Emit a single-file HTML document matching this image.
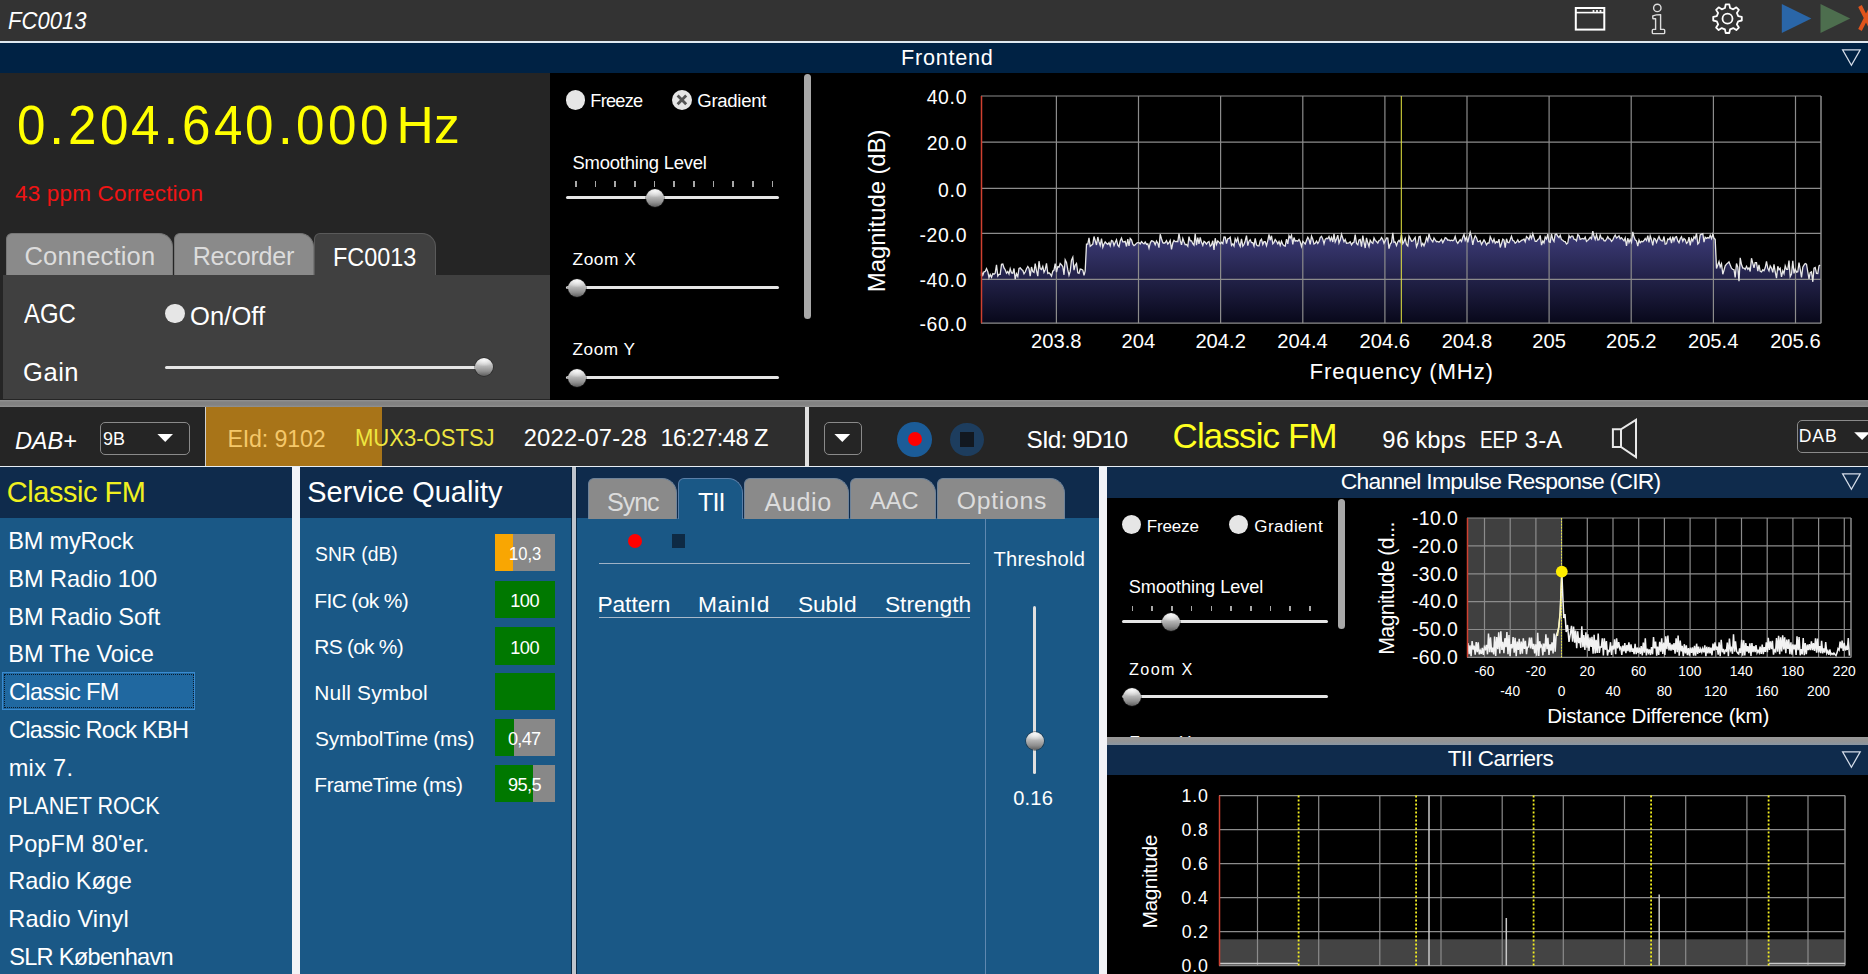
<!DOCTYPE html>
<html><head><meta charset="utf-8"><style>
html,body{margin:0;padding:0;}
body{width:1868px;height:974px;position:relative;overflow:hidden;background:#000;font-family:"Liberation Sans", sans-serif;}
.t{position:absolute;white-space:pre;line-height:1;}
.r{position:absolute;}
</style></head><body>
<div class="r" style="left:0px;top:0px;width:1868.00px;height:41.00px;background:#333333;"></div>
<div class="r" style="left:0px;top:41px;width:1868.00px;height:2.00px;background:#dfe8f0;"></div>
<div class="t" style="left:7.74px;top:9.50px;font-size:23.74px;letter-spacing:0.000px;color:#fff;font-style:italic;transform-origin:0 0;transform:scaleX(0.9285);">FC0013</div>
<svg class="r" style="left:1560px;top:0px" width="308" height="41" viewBox="0 0 308 41">
<rect x="15.8" y="8" width="28.5" height="21.6" fill="none" stroke="#fff" stroke-width="2"/>
<line x1="15" y1="12.6" x2="45" y2="12.6" stroke="#fff" stroke-width="1.6"/>
<circle cx="33.5" cy="11" r="1.1" fill="#fff"/><circle cx="37" cy="11" r="1.1" fill="#fff"/><circle cx="40.5" cy="11" r="1.1" fill="#fff"/>
<circle cx="97.3" cy="7.9" r="3.7" fill="none" stroke="#ddd" stroke-width="1.4"/>
<path d="M92.8 15.8 Q96 14.6 100.6 14.6 V29.4 H103.8 Q104.7 29.4 104.7 30.4 V32.8 Q104.7 33.6 103.8 33.6 H93.2 Q92.3 33.6 92.3 32.8 V30.4 Q92.3 29.4 93.2 29.4 H95.6 V18.8 H93.4 Q92.8 18.8 92.8 18 Z" fill="none" stroke="#ddd" stroke-width="1.4" stroke-linejoin="round"/>
<g transform="translate(167.5,18.7) rotate(-90)" fill="none" stroke="#fff" stroke-width="1.8">
<path d="M10.70 -2.57 L14.29 -1.80 L14.29 1.80 L10.70 2.57 L9.38 5.75 L11.38 8.83 L8.83 11.38 L5.75 9.38 L2.57 10.70 L1.80 14.29 L-1.80 14.29 L-2.57 10.70 L-5.75 9.38 L-8.83 11.38 L-11.38 8.83 L-9.38 5.75 L-10.70 2.57 L-14.29 1.80 L-14.29 -1.80 L-10.70 -2.57 L-9.38 -5.75 L-11.38 -8.83 L-8.83 -11.38 L-5.75 -9.38 L-2.57 -10.70 L-1.80 -14.29 L1.80 -14.29 L2.57 -10.70 L5.75 -9.38 L8.83 -11.38 L11.38 -8.83 L9.38 -5.75 Z" stroke-linejoin="round"/>
<circle r="5"/>
</g>
<polygon points="221.8,4 251.4,18.6 221.8,33" fill="#2a66a8"/>
<polygon points="260.5,4 290.2,18.6 260.5,33" fill="#4d6e4e"/>
<path d="M300 6 L312 30 M312 6 L300 30" stroke="#e0541c" stroke-width="4"/>
</svg>
<div class="r" style="left:0px;top:43px;width:1868.00px;height:30.00px;background:#002244;"></div>
<div class="t" style="left:901.07px;top:46.77px;font-size:21.65px;letter-spacing:0.735px;color:#fff;">Frontend</div>
<svg class="r" style="left:1838px;top:46px" width="26" height="24"><polygon points="4.6,3.8 22.2,3.8 13.4,19.3" fill="none" stroke="#d4dce8" stroke-width="1.25"/></svg>
<div class="r" style="left:0px;top:73px;width:550.00px;height:327.00px;background:#252525;"></div>
<div class="r" style="left:550px;top:73px;width:1318.00px;height:327.00px;background:#000;"></div>
<div class="t" style="left:16.77px;top:98.24px;font-size:54.75px;color:#ffff00;transform-origin:0 0;transform:scaleX(0.935);">0</div>
<div class="t" style="left:49.07px;top:98.24px;font-size:54.75px;color:#ffff00;transform-origin:0 0;transform:scaleX(1.0);">.</div>
<div class="t" style="left:68.29px;top:98.24px;font-size:54.75px;color:#ffff00;transform-origin:0 0;transform:scaleX(0.935);">2</div>
<div class="t" style="left:99.87px;top:98.24px;font-size:54.75px;color:#ffff00;transform-origin:0 0;transform:scaleX(0.935);">0</div>
<div class="t" style="left:130.75px;top:98.24px;font-size:54.75px;color:#ffff00;transform-origin:0 0;transform:scaleX(0.935);">4</div>
<div class="t" style="left:163.37px;top:98.24px;font-size:54.75px;color:#ffff00;transform-origin:0 0;transform:scaleX(1.0);">.</div>
<div class="t" style="left:182.04px;top:98.24px;font-size:54.75px;color:#ffff00;transform-origin:0 0;transform:scaleX(0.935);">6</div>
<div class="t" style="left:213.55px;top:98.24px;font-size:54.75px;color:#ffff00;transform-origin:0 0;transform:scaleX(0.935);">4</div>
<div class="t" style="left:245.37px;top:98.24px;font-size:54.75px;color:#ffff00;transform-origin:0 0;transform:scaleX(0.935);">0</div>
<div class="t" style="left:277.87px;top:98.24px;font-size:54.75px;color:#ffff00;transform-origin:0 0;transform:scaleX(1.0);">.</div>
<div class="t" style="left:296.27px;top:98.24px;font-size:54.75px;color:#ffff00;transform-origin:0 0;transform:scaleX(0.935);">0</div>
<div class="t" style="left:327.87px;top:98.24px;font-size:54.75px;color:#ffff00;transform-origin:0 0;transform:scaleX(0.935);">0</div>
<div class="t" style="left:359.67px;top:98.24px;font-size:54.75px;color:#ffff00;transform-origin:0 0;transform:scaleX(0.935);">0</div>
<div class="t" style="left:396.48px;top:100.26px;font-size:51.54px;letter-spacing:0.225px;color:#ffff00;">Hz</div>
<div class="t" style="left:14.95px;top:183.36px;font-size:22.49px;letter-spacing:0.191px;color:#f01414;">43 ppm Correction</div>
<div class="r" style="left:3px;top:274.5px;width:547.00px;height:124.50px;background:#404040;"></div>
<div class="r" style="left:6px;top:233px;width:167px;height:42px;box-sizing:border-box;background:#8a8a8a;border:1px solid #767676;border-bottom:none;border-radius:6px 14px 0 0;"></div>
<div class="r" style="left:174px;top:233px;width:139.5px;height:42px;box-sizing:border-box;background:#8a8a8a;border:1px solid #767676;border-bottom:none;border-radius:6px 14px 0 0;"></div>
<div class="r" style="left:314px;top:233px;width:122px;height:42px;box-sizing:border-box;background:#404040;border:1px solid #5a5a5a;border-bottom:none;border-radius:6px 14px 0 0;"></div>
<div class="t" style="left:24.52px;top:243.86px;font-size:25.56px;letter-spacing:0.157px;color:#dcdcdc;">Connection</div>
<div class="t" style="left:192.69px;top:244.01px;font-size:25.14px;letter-spacing:-0.219px;color:#dcdcdc;">Recorder</div>
<div class="t" style="left:332.73px;top:244.51px;font-size:25.14px;letter-spacing:0.000px;color:#ffffff;transform-origin:0 0;transform:scaleX(0.9322);">FC0013</div>
<div class="t" style="left:24.40px;top:301.30px;font-size:26.82px;letter-spacing:0.000px;color:#fff;transform-origin:0 0;transform:scaleX(0.8929);">AGC</div>
<div class="r" style="left:165.2px;top:303.7px;width:19.6px;height:19.6px;border-radius:50%;background:#e6e6e6"></div>
<div class="t" style="left:189.95px;top:304.06px;font-size:25.56px;letter-spacing:0.093px;color:#fff;">On/Off</div>
<div class="t" style="left:23.12px;top:359.96px;font-size:25.56px;letter-spacing:0.470px;color:#fff;">Gain</div>
<div class="r" style="left:165px;top:366.0px;width:317.00px;height:3.00px;background:#e6e6e6;border-radius:1.5px;"></div>
<div class="r" style="left:475.0px;top:358.4px;width:18px;height:18px;border-radius:50%;background:radial-gradient(ellipse 60% 35% at 50% 12%, rgba(250,250,250,0.9) 0%, rgba(250,250,250,0) 100%), linear-gradient(#e4e4e4 0%, #c4c4c4 35%, #8e8e8e 75%, #5e5e5e 100%);box-shadow:0 0 0 0.7px rgba(30,30,30,0.6);"></div>
<div class="r" style="left:565.7px;top:90.2px;width:19.8px;height:19.8px;border-radius:50%;background:#e6e6e6"></div>
<div class="t" style="left:590.35px;top:92.43px;font-size:18.16px;letter-spacing:-0.739px;color:#fff;">Freeze</div>
<div class="r" style="left:672.1px;top:90.2px;width:19.8px;height:19.8px;border-radius:50%;background:#e6e6e6"></div>
<svg class="r" style="left:672.1px;top:90.2px" width="19.8" height="19.8"><path d="M5.6000000000000005 5.6000000000000005 L14.2 14.2 M14.2 5.6000000000000005 L5.6000000000000005 14.2" stroke="#555" stroke-width="2.8"/></svg>
<div class="t" style="left:697.27px;top:92.07px;font-size:18.58px;letter-spacing:-0.302px;color:#fff;">Gradient</div>
<div class="t" style="left:572.47px;top:154.39px;font-size:18.44px;letter-spacing:-0.209px;color:#fff;">Smoothing Level</div>
<div class="r" style="left:575.0px;top:181px;width:1.60px;height:6.00px;background:#a8a8a8;"></div>
<div class="r" style="left:594.67px;top:181px;width:1.60px;height:6.00px;background:#a8a8a8;"></div>
<div class="r" style="left:614.34px;top:181px;width:1.60px;height:6.00px;background:#a8a8a8;"></div>
<div class="r" style="left:634.01px;top:181px;width:1.60px;height:6.00px;background:#a8a8a8;"></div>
<div class="r" style="left:653.6800000000001px;top:181px;width:1.60px;height:6.00px;background:#a8a8a8;"></div>
<div class="r" style="left:673.35px;top:181px;width:1.60px;height:6.00px;background:#a8a8a8;"></div>
<div class="r" style="left:693.02px;top:181px;width:1.60px;height:6.00px;background:#a8a8a8;"></div>
<div class="r" style="left:712.69px;top:181px;width:1.60px;height:6.00px;background:#a8a8a8;"></div>
<div class="r" style="left:732.36px;top:181px;width:1.60px;height:6.00px;background:#a8a8a8;"></div>
<div class="r" style="left:752.03px;top:181px;width:1.60px;height:6.00px;background:#a8a8a8;"></div>
<div class="r" style="left:771.7px;top:181px;width:1.60px;height:6.00px;background:#a8a8a8;"></div>
<div class="r" style="left:566px;top:195.8px;width:213.30px;height:3.00px;background:#e6e6e6;border-radius:1.5px;"></div>
<div class="r" style="left:645.7px;top:189.0px;width:18px;height:18px;border-radius:50%;background:radial-gradient(ellipse 60% 35% at 50% 12%, rgba(250,250,250,0.9) 0%, rgba(250,250,250,0) 100%), linear-gradient(#e4e4e4 0%, #c4c4c4 35%, #8e8e8e 75%, #5e5e5e 100%);box-shadow:0 0 0 0.7px rgba(30,30,30,0.6);"></div>
<div class="t" style="left:572.58px;top:250.94px;font-size:17.32px;letter-spacing:0.530px;color:#fff;">Zoom X</div>
<div class="r" style="left:566px;top:285.8px;width:213.30px;height:3.00px;background:#e6e6e6;border-radius:1.5px;"></div>
<div class="r" style="left:567.5px;top:279.0px;width:18px;height:18px;border-radius:50%;background:radial-gradient(ellipse 60% 35% at 50% 12%, rgba(250,250,250,0.9) 0%, rgba(250,250,250,0) 100%), linear-gradient(#e4e4e4 0%, #c4c4c4 35%, #8e8e8e 75%, #5e5e5e 100%);box-shadow:0 0 0 0.7px rgba(30,30,30,0.6);"></div>
<div class="t" style="left:572.58px;top:340.75px;font-size:17.18px;letter-spacing:0.535px;color:#fff;">Zoom Y</div>
<div class="r" style="left:566px;top:376.0px;width:213.30px;height:3.00px;background:#e6e6e6;border-radius:1.5px;"></div>
<div class="r" style="left:567.5px;top:368.8px;width:18px;height:18px;border-radius:50%;background:radial-gradient(ellipse 60% 35% at 50% 12%, rgba(250,250,250,0.9) 0%, rgba(250,250,250,0) 100%), linear-gradient(#e4e4e4 0%, #c4c4c4 35%, #8e8e8e 75%, #5e5e5e 100%);box-shadow:0 0 0 0.7px rgba(30,30,30,0.6);"></div>
<div class="r" style="left:803.5px;top:74px;width:7.50px;height:245.00px;background:#a8a8a8;border-radius:4px;"></div>
<svg class="r" style="left:0;top:0" width="1868" height="974">
<defs><linearGradient id="fg" x1="0" y1="0" x2="0" y2="1"><stop offset="0" stop-color="#3e3d7a"/><stop offset="1" stop-color="#08081a"/></linearGradient></defs>
<polygon points="981,323.2 981.5,276.0 981.5,271.8 982.8,275.2 984.0,271.8 985.2,271.4 986.5,268.6 987.8,271.7 989.0,277.6 990.2,274.5 991.5,277.2 992.8,273.6 994.0,274.2 995.2,273.2 996.5,264.8 997.8,276.1 999.0,274.4 1000.2,274.3 1001.5,264.4 1002.8,264.1 1004.0,267.9 1005.2,269.7 1006.5,273.2 1007.8,271.5 1009.0,274.0 1010.2,268.7 1011.5,272.9 1012.8,273.3 1014.0,268.5 1015.2,279.1 1016.5,273.8 1017.8,276.6 1019.0,268.4 1020.2,267.8 1021.5,269.5 1022.8,270.5 1024.0,273.8 1025.2,272.0 1026.5,268.8 1027.8,266.5 1029.0,268.4 1030.2,276.1 1031.5,267.0 1032.8,271.6 1034.0,272.4 1035.2,263.7 1036.5,270.6 1037.8,276.2 1039.0,261.2 1040.2,268.7 1041.5,269.6 1042.8,266.4 1044.0,272.2 1045.2,269.7 1046.5,263.3 1047.8,273.5 1049.0,272.8 1050.2,274.0 1051.5,276.1 1052.8,271.2 1054.0,270.1 1055.2,263.6 1056.5,272.2 1057.8,266.6 1059.0,267.2 1060.2,263.5 1061.5,264.8 1062.8,266.7 1064.0,274.8 1065.2,259.8 1066.5,262.4 1067.8,269.9 1069.0,275.3 1070.2,271.4 1071.5,260.1 1072.8,257.3 1074.0,270.2 1075.2,265.2 1076.5,263.4 1077.8,272.8 1079.0,273.3 1080.2,269.0 1081.5,269.3 1082.8,270.1 1084.0,275.3 1085.2,270.8 1086.5,244.1 1087.8,244.1 1089.0,237.8 1090.2,246.3 1091.5,245.3 1092.8,244.1 1094.0,236.5 1095.2,240.5 1096.5,245.0 1097.8,237.0 1099.0,241.9 1100.2,245.5 1101.5,238.5 1102.8,247.2 1104.0,244.0 1105.2,241.9 1106.5,243.4 1107.8,244.3 1109.0,242.7 1110.2,245.8 1111.5,240.4 1112.8,241.1 1114.0,245.5 1115.2,242.4 1116.5,239.7 1117.8,245.1 1119.0,246.7 1120.2,241.0 1121.5,238.1 1122.8,241.9 1124.0,241.8 1125.2,241.4 1126.5,246.5 1127.8,239.2 1129.0,246.0 1130.2,238.4 1131.5,239.9 1132.8,244.1 1134.0,245.6 1135.2,244.8 1136.5,243.2 1137.8,242.6 1139.0,242.6 1140.2,243.9 1141.5,241.6 1142.8,243.0 1144.0,243.9 1145.2,242.1 1146.5,244.4 1147.8,243.8 1149.0,248.1 1150.2,243.1 1151.5,240.8 1152.8,241.0 1154.0,242.0 1155.2,244.8 1156.5,241.0 1157.8,243.2 1159.0,247.6 1160.2,234.3 1161.5,238.7 1162.8,242.7 1164.0,243.2 1165.2,242.7 1166.5,240.7 1167.8,244.0 1169.0,242.8 1170.2,240.4 1171.5,249.3 1172.8,243.0 1174.0,240.3 1175.2,241.6 1176.5,241.3 1177.8,241.7 1179.0,233.7 1180.2,240.4 1181.5,244.9 1182.8,238.4 1184.0,241.7 1185.2,244.7 1186.5,244.4 1187.8,246.3 1189.0,236.7 1190.2,240.8 1191.5,240.8 1192.8,243.7 1194.0,245.1 1195.2,233.8 1196.5,245.1 1197.8,237.5 1199.0,243.8 1200.2,237.3 1201.5,242.3 1202.8,245.3 1204.0,241.3 1205.2,242.3 1206.5,244.1 1207.8,242.2 1209.0,241.5 1210.2,246.3 1211.5,244.9 1212.8,240.8 1214.0,249.9 1215.2,238.2 1216.5,244.4 1217.8,240.9 1219.0,242.1 1220.2,243.8 1221.5,242.3 1222.8,243.6 1224.0,237.0 1225.2,237.1 1226.5,243.5 1227.8,238.7 1229.0,238.5 1230.2,237.2 1231.5,245.4 1232.8,243.8 1234.0,246.0 1235.2,238.7 1236.5,241.6 1237.8,238.1 1239.0,243.8 1240.2,246.3 1241.5,238.8 1242.8,246.2 1244.0,244.5 1245.2,241.0 1246.5,235.6 1247.8,245.7 1249.0,241.2 1250.2,239.7 1251.5,242.7 1252.8,242.7 1254.0,245.9 1255.2,238.4 1256.5,244.8 1257.8,245.9 1259.0,245.8 1260.2,240.9 1261.5,239.2 1262.8,244.4 1264.0,241.7 1265.2,241.7 1266.5,245.6 1267.8,240.6 1269.0,234.5 1270.2,240.2 1271.5,235.8 1272.8,243.8 1274.0,242.3 1275.2,239.5 1276.5,241.3 1277.8,243.8 1279.0,241.5 1280.2,245.3 1281.5,241.1 1282.8,244.4 1284.0,245.7 1285.2,246.1 1286.5,239.2 1287.8,243.9 1289.0,235.6 1290.2,238.0 1291.5,235.3 1292.8,244.4 1294.0,237.5 1295.2,241.1 1296.5,240.6 1297.8,241.1 1299.0,239.4 1300.2,241.8 1301.5,246.5 1302.8,241.3 1304.0,242.7 1305.2,244.1 1306.5,240.5 1307.8,237.3 1309.0,239.4 1310.2,244.3 1311.5,236.1 1312.8,239.3 1314.0,244.1 1315.2,243.4 1316.5,241.1 1317.8,243.4 1319.0,241.5 1320.2,237.5 1321.5,236.3 1322.8,239.1 1324.0,243.8 1325.2,239.3 1326.5,238.3 1327.8,238.7 1329.0,236.4 1330.2,240.6 1331.5,237.4 1332.8,242.0 1334.0,233.8 1335.2,241.9 1336.5,239.0 1337.8,235.1 1339.0,243.1 1340.2,240.1 1341.5,234.2 1342.8,238.2 1344.0,241.7 1345.2,239.5 1346.5,243.2 1347.8,243.1 1349.0,242.8 1350.2,241.8 1351.5,244.8 1352.8,242.8 1354.0,242.2 1355.2,234.5 1356.5,243.5 1357.8,244.7 1359.0,239.9 1360.2,239.4 1361.5,246.6 1362.8,235.5 1364.0,242.1 1365.2,248.0 1366.5,237.9 1367.8,242.8 1369.0,246.4 1370.2,240.3 1371.5,242.4 1372.8,243.4 1374.0,238.0 1375.2,240.4 1376.5,241.5 1377.8,243.1 1379.0,240.5 1380.2,240.0 1381.5,237.6 1382.8,239.5 1384.0,243.3 1385.2,240.9 1386.5,238.0 1387.8,238.1 1389.0,248.6 1390.2,244.0 1391.5,242.5 1392.8,232.8 1394.0,242.4 1395.2,242.0 1396.5,245.6 1397.8,241.8 1399.0,240.3 1400.2,242.1 1401.5,234.7 1402.8,243.6 1404.0,241.5 1405.2,238.4 1406.5,244.4 1407.8,245.9 1409.0,236.2 1410.2,238.4 1411.5,241.3 1412.8,241.0 1414.0,239.2 1415.2,237.5 1416.5,246.8 1417.8,243.5 1419.0,236.8 1420.2,236.3 1421.5,245.5 1422.8,243.3 1424.0,245.8 1425.2,242.8 1426.5,237.7 1427.8,241.1 1429.0,233.8 1430.2,238.1 1431.5,240.1 1432.8,241.9 1434.0,238.1 1435.2,239.9 1436.5,241.7 1437.8,241.4 1439.0,242.2 1440.2,240.9 1441.5,239.3 1442.8,242.6 1444.0,240.4 1445.2,237.7 1446.5,238.3 1447.8,240.2 1449.0,239.9 1450.2,240.7 1451.5,240.2 1452.8,240.7 1454.0,239.8 1455.2,236.4 1456.5,241.4 1457.8,243.3 1459.0,241.4 1460.2,239.6 1461.5,241.5 1462.8,237.2 1464.0,234.4 1465.2,240.3 1466.5,237.3 1467.8,242.3 1469.0,236.8 1470.2,232.2 1471.5,236.9 1472.8,244.8 1474.0,238.9 1475.2,235.9 1476.5,237.7 1477.8,241.6 1479.0,241.5 1480.2,240.5 1481.5,244.4 1482.8,242.1 1484.0,239.9 1485.2,241.8 1486.5,244.9 1487.8,242.9 1489.0,243.0 1490.2,236.7 1491.5,239.5 1492.8,242.1 1494.0,239.0 1495.2,243.1 1496.5,241.7 1497.8,242.6 1499.0,239.2 1500.2,247.5 1501.5,243.6 1502.8,239.2 1504.0,240.1 1505.2,247.6 1506.5,238.8 1507.8,242.4 1509.0,242.8 1510.2,239.8 1511.5,236.3 1512.8,240.4 1514.0,240.9 1515.2,243.2 1516.5,242.1 1517.8,239.8 1519.0,242.3 1520.2,241.4 1521.5,240.4 1522.8,239.9 1524.0,239.0 1525.2,241.8 1526.5,236.5 1527.8,237.8 1529.0,239.7 1530.2,235.3 1531.5,238.4 1532.8,233.6 1534.0,237.6 1535.2,241.4 1536.5,241.3 1537.8,239.5 1539.0,238.9 1540.2,235.4 1541.5,245.1 1542.8,241.1 1544.0,242.9 1545.2,236.9 1546.5,239.0 1547.8,234.1 1549.0,241.9 1550.2,242.4 1551.5,233.9 1552.8,239.4 1554.0,241.4 1555.2,234.2 1556.5,234.0 1557.8,236.3 1559.0,237.6 1560.2,235.3 1561.5,239.6 1562.8,240.2 1564.0,241.4 1565.2,241.6 1566.5,244.0 1567.8,242.9 1569.0,235.5 1570.2,237.9 1571.5,236.2 1572.8,236.2 1574.0,239.2 1575.2,239.4 1576.5,240.9 1577.8,234.6 1579.0,235.7 1580.2,239.3 1581.5,238.8 1582.8,238.4 1584.0,239.1 1585.2,237.1 1586.5,241.4 1587.8,240.4 1589.0,239.0 1590.2,237.3 1591.5,238.8 1592.8,231.1 1594.0,236.3 1595.2,239.4 1596.5,234.7 1597.8,239.9 1599.0,239.7 1600.2,235.1 1601.5,238.5 1602.8,238.3 1604.0,240.6 1605.2,241.0 1606.5,239.1 1607.8,236.6 1609.0,238.7 1610.2,239.0 1611.5,241.4 1612.8,240.0 1614.0,237.0 1615.2,235.1 1616.5,238.0 1617.8,236.9 1619.0,235.8 1620.2,238.8 1621.5,237.6 1622.8,239.4 1624.0,240.7 1625.2,237.8 1626.5,246.0 1627.8,238.1 1629.0,242.4 1630.2,239.4 1631.5,242.4 1632.8,231.9 1634.0,236.8 1635.2,239.8 1636.5,240.8 1637.8,246.0 1639.0,240.0 1640.2,242.8 1641.5,241.3 1642.8,241.8 1644.0,240.5 1645.2,238.5 1646.5,240.5 1647.8,235.7 1649.0,242.5 1650.2,235.9 1651.5,239.7 1652.8,245.3 1654.0,238.2 1655.2,238.9 1656.5,242.4 1657.8,238.9 1659.0,236.4 1660.2,239.6 1661.5,240.6 1662.8,241.0 1664.0,236.5 1665.2,244.1 1666.5,243.8 1667.8,238.9 1669.0,239.6 1670.2,237.5 1671.5,243.0 1672.8,236.7 1674.0,240.8 1675.2,237.3 1676.5,236.7 1677.8,240.9 1679.0,242.7 1680.2,238.7 1681.5,236.7 1682.8,241.1 1684.0,238.6 1685.2,239.6 1686.5,243.3 1687.8,242.1 1689.0,237.1 1690.2,245.5 1691.5,238.7 1692.8,241.0 1694.0,236.7 1695.2,238.5 1696.5,233.4 1697.8,244.0 1699.0,242.7 1700.2,235.0 1701.5,234.1 1702.8,233.7 1704.0,242.1 1705.2,237.2 1706.5,238.4 1707.8,237.6 1709.0,238.2 1710.2,235.3 1711.5,238.6 1712.8,234.2 1714.0,238.3 1715.2,239.4 1716.5,268.4 1717.8,264.9 1719.0,261.6 1720.2,267.0 1721.5,263.8 1722.8,274.2 1724.0,270.2 1725.2,265.9 1726.5,264.1 1727.8,263.0 1729.0,261.9 1730.2,264.9 1731.5,268.2 1732.8,269.4 1734.0,269.7 1735.2,277.4 1736.5,263.5 1737.8,267.1 1739.0,281.1 1740.2,257.8 1741.5,264.6 1742.8,268.1 1744.0,268.1 1745.2,269.4 1746.5,266.3 1747.8,269.3 1749.0,267.8 1750.2,271.5 1751.5,258.2 1752.8,263.3 1754.0,267.8 1755.2,262.7 1756.5,262.7 1757.8,271.1 1759.0,264.8 1760.2,271.3 1761.5,271.9 1762.8,269.8 1764.0,270.8 1765.2,267.8 1766.5,261.4 1767.8,268.3 1769.0,270.8 1770.2,265.9 1771.5,268.1 1772.8,272.4 1774.0,264.4 1775.2,272.0 1776.5,278.2 1777.8,266.2 1779.0,269.7 1780.2,268.3 1781.5,276.8 1782.8,270.8 1784.0,273.7 1785.2,265.8 1786.5,269.3 1787.8,269.4 1789.0,260.6 1790.2,276.7 1791.5,274.1 1792.8,260.9 1794.0,273.4 1795.2,269.1 1796.5,272.1 1797.8,271.7 1799.0,262.5 1800.2,269.0 1801.5,277.5 1802.8,267.3 1804.0,265.1 1805.2,263.5 1806.5,264.2 1807.8,272.0 1809.0,278.9 1810.2,272.6 1811.5,271.8 1812.8,281.8 1814.0,268.1 1815.2,267.4 1816.5,273.4 1817.8,273.6 1819.0,265.8 1820.2,265.1 1821,323.2" fill="url(#fg)"/>
<line x1="981" y1="96.0" x2="1821" y2="96.0" stroke="#8c8c8c" stroke-width="1.2"/>
<line x1="981" y1="142.2" x2="1821" y2="142.2" stroke="#8c8c8c" stroke-width="1.2"/>
<line x1="981" y1="188.4" x2="1821" y2="188.4" stroke="#8c8c8c" stroke-width="1.2"/>
<line x1="981" y1="233.4" x2="1821" y2="233.4" stroke="#8c8c8c" stroke-width="1.2"/>
<line x1="981" y1="279.3" x2="1821" y2="279.3" stroke="#8c8c8c" stroke-width="1.2"/>
<line x1="981" y1="323.2" x2="1821" y2="323.2" stroke="#8c8c8c" stroke-width="1.2"/>
<line x1="1056.4" y1="96" x2="1056.4" y2="323.2" stroke="#8c8c8c" stroke-width="1.2"/>
<line x1="1138.5" y1="96" x2="1138.5" y2="323.2" stroke="#8c8c8c" stroke-width="1.2"/>
<line x1="1220.6" y1="96" x2="1220.6" y2="323.2" stroke="#8c8c8c" stroke-width="1.2"/>
<line x1="1302.8" y1="96" x2="1302.8" y2="323.2" stroke="#8c8c8c" stroke-width="1.2"/>
<line x1="1384.9" y1="96" x2="1384.9" y2="323.2" stroke="#8c8c8c" stroke-width="1.2"/>
<line x1="1467.0" y1="96" x2="1467.0" y2="323.2" stroke="#8c8c8c" stroke-width="1.2"/>
<line x1="1549.1" y1="96" x2="1549.1" y2="323.2" stroke="#8c8c8c" stroke-width="1.2"/>
<line x1="1631.2" y1="96" x2="1631.2" y2="323.2" stroke="#8c8c8c" stroke-width="1.2"/>
<line x1="1713.4" y1="96" x2="1713.4" y2="323.2" stroke="#8c8c8c" stroke-width="1.2"/>
<line x1="1795.5" y1="96" x2="1795.5" y2="323.2" stroke="#8c8c8c" stroke-width="1.2"/>
<line x1="1821" y1="96" x2="1821" y2="323.2" stroke="#8c8c8c" stroke-width="1.5"/>
<polyline points="981.5,276.0 981.5,271.8 982.8,275.2 984.0,271.8 985.2,271.4 986.5,268.6 987.8,271.7 989.0,277.6 990.2,274.5 991.5,277.2 992.8,273.6 994.0,274.2 995.2,273.2 996.5,264.8 997.8,276.1 999.0,274.4 1000.2,274.3 1001.5,264.4 1002.8,264.1 1004.0,267.9 1005.2,269.7 1006.5,273.2 1007.8,271.5 1009.0,274.0 1010.2,268.7 1011.5,272.9 1012.8,273.3 1014.0,268.5 1015.2,279.1 1016.5,273.8 1017.8,276.6 1019.0,268.4 1020.2,267.8 1021.5,269.5 1022.8,270.5 1024.0,273.8 1025.2,272.0 1026.5,268.8 1027.8,266.5 1029.0,268.4 1030.2,276.1 1031.5,267.0 1032.8,271.6 1034.0,272.4 1035.2,263.7 1036.5,270.6 1037.8,276.2 1039.0,261.2 1040.2,268.7 1041.5,269.6 1042.8,266.4 1044.0,272.2 1045.2,269.7 1046.5,263.3 1047.8,273.5 1049.0,272.8 1050.2,274.0 1051.5,276.1 1052.8,271.2 1054.0,270.1 1055.2,263.6 1056.5,272.2 1057.8,266.6 1059.0,267.2 1060.2,263.5 1061.5,264.8 1062.8,266.7 1064.0,274.8 1065.2,259.8 1066.5,262.4 1067.8,269.9 1069.0,275.3 1070.2,271.4 1071.5,260.1 1072.8,257.3 1074.0,270.2 1075.2,265.2 1076.5,263.4 1077.8,272.8 1079.0,273.3 1080.2,269.0 1081.5,269.3 1082.8,270.1 1084.0,275.3 1085.2,270.8 1086.5,244.1 1087.8,244.1 1089.0,237.8 1090.2,246.3 1091.5,245.3 1092.8,244.1 1094.0,236.5 1095.2,240.5 1096.5,245.0 1097.8,237.0 1099.0,241.9 1100.2,245.5 1101.5,238.5 1102.8,247.2 1104.0,244.0 1105.2,241.9 1106.5,243.4 1107.8,244.3 1109.0,242.7 1110.2,245.8 1111.5,240.4 1112.8,241.1 1114.0,245.5 1115.2,242.4 1116.5,239.7 1117.8,245.1 1119.0,246.7 1120.2,241.0 1121.5,238.1 1122.8,241.9 1124.0,241.8 1125.2,241.4 1126.5,246.5 1127.8,239.2 1129.0,246.0 1130.2,238.4 1131.5,239.9 1132.8,244.1 1134.0,245.6 1135.2,244.8 1136.5,243.2 1137.8,242.6 1139.0,242.6 1140.2,243.9 1141.5,241.6 1142.8,243.0 1144.0,243.9 1145.2,242.1 1146.5,244.4 1147.8,243.8 1149.0,248.1 1150.2,243.1 1151.5,240.8 1152.8,241.0 1154.0,242.0 1155.2,244.8 1156.5,241.0 1157.8,243.2 1159.0,247.6 1160.2,234.3 1161.5,238.7 1162.8,242.7 1164.0,243.2 1165.2,242.7 1166.5,240.7 1167.8,244.0 1169.0,242.8 1170.2,240.4 1171.5,249.3 1172.8,243.0 1174.0,240.3 1175.2,241.6 1176.5,241.3 1177.8,241.7 1179.0,233.7 1180.2,240.4 1181.5,244.9 1182.8,238.4 1184.0,241.7 1185.2,244.7 1186.5,244.4 1187.8,246.3 1189.0,236.7 1190.2,240.8 1191.5,240.8 1192.8,243.7 1194.0,245.1 1195.2,233.8 1196.5,245.1 1197.8,237.5 1199.0,243.8 1200.2,237.3 1201.5,242.3 1202.8,245.3 1204.0,241.3 1205.2,242.3 1206.5,244.1 1207.8,242.2 1209.0,241.5 1210.2,246.3 1211.5,244.9 1212.8,240.8 1214.0,249.9 1215.2,238.2 1216.5,244.4 1217.8,240.9 1219.0,242.1 1220.2,243.8 1221.5,242.3 1222.8,243.6 1224.0,237.0 1225.2,237.1 1226.5,243.5 1227.8,238.7 1229.0,238.5 1230.2,237.2 1231.5,245.4 1232.8,243.8 1234.0,246.0 1235.2,238.7 1236.5,241.6 1237.8,238.1 1239.0,243.8 1240.2,246.3 1241.5,238.8 1242.8,246.2 1244.0,244.5 1245.2,241.0 1246.5,235.6 1247.8,245.7 1249.0,241.2 1250.2,239.7 1251.5,242.7 1252.8,242.7 1254.0,245.9 1255.2,238.4 1256.5,244.8 1257.8,245.9 1259.0,245.8 1260.2,240.9 1261.5,239.2 1262.8,244.4 1264.0,241.7 1265.2,241.7 1266.5,245.6 1267.8,240.6 1269.0,234.5 1270.2,240.2 1271.5,235.8 1272.8,243.8 1274.0,242.3 1275.2,239.5 1276.5,241.3 1277.8,243.8 1279.0,241.5 1280.2,245.3 1281.5,241.1 1282.8,244.4 1284.0,245.7 1285.2,246.1 1286.5,239.2 1287.8,243.9 1289.0,235.6 1290.2,238.0 1291.5,235.3 1292.8,244.4 1294.0,237.5 1295.2,241.1 1296.5,240.6 1297.8,241.1 1299.0,239.4 1300.2,241.8 1301.5,246.5 1302.8,241.3 1304.0,242.7 1305.2,244.1 1306.5,240.5 1307.8,237.3 1309.0,239.4 1310.2,244.3 1311.5,236.1 1312.8,239.3 1314.0,244.1 1315.2,243.4 1316.5,241.1 1317.8,243.4 1319.0,241.5 1320.2,237.5 1321.5,236.3 1322.8,239.1 1324.0,243.8 1325.2,239.3 1326.5,238.3 1327.8,238.7 1329.0,236.4 1330.2,240.6 1331.5,237.4 1332.8,242.0 1334.0,233.8 1335.2,241.9 1336.5,239.0 1337.8,235.1 1339.0,243.1 1340.2,240.1 1341.5,234.2 1342.8,238.2 1344.0,241.7 1345.2,239.5 1346.5,243.2 1347.8,243.1 1349.0,242.8 1350.2,241.8 1351.5,244.8 1352.8,242.8 1354.0,242.2 1355.2,234.5 1356.5,243.5 1357.8,244.7 1359.0,239.9 1360.2,239.4 1361.5,246.6 1362.8,235.5 1364.0,242.1 1365.2,248.0 1366.5,237.9 1367.8,242.8 1369.0,246.4 1370.2,240.3 1371.5,242.4 1372.8,243.4 1374.0,238.0 1375.2,240.4 1376.5,241.5 1377.8,243.1 1379.0,240.5 1380.2,240.0 1381.5,237.6 1382.8,239.5 1384.0,243.3 1385.2,240.9 1386.5,238.0 1387.8,238.1 1389.0,248.6 1390.2,244.0 1391.5,242.5 1392.8,232.8 1394.0,242.4 1395.2,242.0 1396.5,245.6 1397.8,241.8 1399.0,240.3 1400.2,242.1 1401.5,234.7 1402.8,243.6 1404.0,241.5 1405.2,238.4 1406.5,244.4 1407.8,245.9 1409.0,236.2 1410.2,238.4 1411.5,241.3 1412.8,241.0 1414.0,239.2 1415.2,237.5 1416.5,246.8 1417.8,243.5 1419.0,236.8 1420.2,236.3 1421.5,245.5 1422.8,243.3 1424.0,245.8 1425.2,242.8 1426.5,237.7 1427.8,241.1 1429.0,233.8 1430.2,238.1 1431.5,240.1 1432.8,241.9 1434.0,238.1 1435.2,239.9 1436.5,241.7 1437.8,241.4 1439.0,242.2 1440.2,240.9 1441.5,239.3 1442.8,242.6 1444.0,240.4 1445.2,237.7 1446.5,238.3 1447.8,240.2 1449.0,239.9 1450.2,240.7 1451.5,240.2 1452.8,240.7 1454.0,239.8 1455.2,236.4 1456.5,241.4 1457.8,243.3 1459.0,241.4 1460.2,239.6 1461.5,241.5 1462.8,237.2 1464.0,234.4 1465.2,240.3 1466.5,237.3 1467.8,242.3 1469.0,236.8 1470.2,232.2 1471.5,236.9 1472.8,244.8 1474.0,238.9 1475.2,235.9 1476.5,237.7 1477.8,241.6 1479.0,241.5 1480.2,240.5 1481.5,244.4 1482.8,242.1 1484.0,239.9 1485.2,241.8 1486.5,244.9 1487.8,242.9 1489.0,243.0 1490.2,236.7 1491.5,239.5 1492.8,242.1 1494.0,239.0 1495.2,243.1 1496.5,241.7 1497.8,242.6 1499.0,239.2 1500.2,247.5 1501.5,243.6 1502.8,239.2 1504.0,240.1 1505.2,247.6 1506.5,238.8 1507.8,242.4 1509.0,242.8 1510.2,239.8 1511.5,236.3 1512.8,240.4 1514.0,240.9 1515.2,243.2 1516.5,242.1 1517.8,239.8 1519.0,242.3 1520.2,241.4 1521.5,240.4 1522.8,239.9 1524.0,239.0 1525.2,241.8 1526.5,236.5 1527.8,237.8 1529.0,239.7 1530.2,235.3 1531.5,238.4 1532.8,233.6 1534.0,237.6 1535.2,241.4 1536.5,241.3 1537.8,239.5 1539.0,238.9 1540.2,235.4 1541.5,245.1 1542.8,241.1 1544.0,242.9 1545.2,236.9 1546.5,239.0 1547.8,234.1 1549.0,241.9 1550.2,242.4 1551.5,233.9 1552.8,239.4 1554.0,241.4 1555.2,234.2 1556.5,234.0 1557.8,236.3 1559.0,237.6 1560.2,235.3 1561.5,239.6 1562.8,240.2 1564.0,241.4 1565.2,241.6 1566.5,244.0 1567.8,242.9 1569.0,235.5 1570.2,237.9 1571.5,236.2 1572.8,236.2 1574.0,239.2 1575.2,239.4 1576.5,240.9 1577.8,234.6 1579.0,235.7 1580.2,239.3 1581.5,238.8 1582.8,238.4 1584.0,239.1 1585.2,237.1 1586.5,241.4 1587.8,240.4 1589.0,239.0 1590.2,237.3 1591.5,238.8 1592.8,231.1 1594.0,236.3 1595.2,239.4 1596.5,234.7 1597.8,239.9 1599.0,239.7 1600.2,235.1 1601.5,238.5 1602.8,238.3 1604.0,240.6 1605.2,241.0 1606.5,239.1 1607.8,236.6 1609.0,238.7 1610.2,239.0 1611.5,241.4 1612.8,240.0 1614.0,237.0 1615.2,235.1 1616.5,238.0 1617.8,236.9 1619.0,235.8 1620.2,238.8 1621.5,237.6 1622.8,239.4 1624.0,240.7 1625.2,237.8 1626.5,246.0 1627.8,238.1 1629.0,242.4 1630.2,239.4 1631.5,242.4 1632.8,231.9 1634.0,236.8 1635.2,239.8 1636.5,240.8 1637.8,246.0 1639.0,240.0 1640.2,242.8 1641.5,241.3 1642.8,241.8 1644.0,240.5 1645.2,238.5 1646.5,240.5 1647.8,235.7 1649.0,242.5 1650.2,235.9 1651.5,239.7 1652.8,245.3 1654.0,238.2 1655.2,238.9 1656.5,242.4 1657.8,238.9 1659.0,236.4 1660.2,239.6 1661.5,240.6 1662.8,241.0 1664.0,236.5 1665.2,244.1 1666.5,243.8 1667.8,238.9 1669.0,239.6 1670.2,237.5 1671.5,243.0 1672.8,236.7 1674.0,240.8 1675.2,237.3 1676.5,236.7 1677.8,240.9 1679.0,242.7 1680.2,238.7 1681.5,236.7 1682.8,241.1 1684.0,238.6 1685.2,239.6 1686.5,243.3 1687.8,242.1 1689.0,237.1 1690.2,245.5 1691.5,238.7 1692.8,241.0 1694.0,236.7 1695.2,238.5 1696.5,233.4 1697.8,244.0 1699.0,242.7 1700.2,235.0 1701.5,234.1 1702.8,233.7 1704.0,242.1 1705.2,237.2 1706.5,238.4 1707.8,237.6 1709.0,238.2 1710.2,235.3 1711.5,238.6 1712.8,234.2 1714.0,238.3 1715.2,239.4 1716.5,268.4 1717.8,264.9 1719.0,261.6 1720.2,267.0 1721.5,263.8 1722.8,274.2 1724.0,270.2 1725.2,265.9 1726.5,264.1 1727.8,263.0 1729.0,261.9 1730.2,264.9 1731.5,268.2 1732.8,269.4 1734.0,269.7 1735.2,277.4 1736.5,263.5 1737.8,267.1 1739.0,281.1 1740.2,257.8 1741.5,264.6 1742.8,268.1 1744.0,268.1 1745.2,269.4 1746.5,266.3 1747.8,269.3 1749.0,267.8 1750.2,271.5 1751.5,258.2 1752.8,263.3 1754.0,267.8 1755.2,262.7 1756.5,262.7 1757.8,271.1 1759.0,264.8 1760.2,271.3 1761.5,271.9 1762.8,269.8 1764.0,270.8 1765.2,267.8 1766.5,261.4 1767.8,268.3 1769.0,270.8 1770.2,265.9 1771.5,268.1 1772.8,272.4 1774.0,264.4 1775.2,272.0 1776.5,278.2 1777.8,266.2 1779.0,269.7 1780.2,268.3 1781.5,276.8 1782.8,270.8 1784.0,273.7 1785.2,265.8 1786.5,269.3 1787.8,269.4 1789.0,260.6 1790.2,276.7 1791.5,274.1 1792.8,260.9 1794.0,273.4 1795.2,269.1 1796.5,272.1 1797.8,271.7 1799.0,262.5 1800.2,269.0 1801.5,277.5 1802.8,267.3 1804.0,265.1 1805.2,263.5 1806.5,264.2 1807.8,272.0 1809.0,278.9 1810.2,272.6 1811.5,271.8 1812.8,281.8 1814.0,268.1 1815.2,267.4 1816.5,273.4 1817.8,273.6 1819.0,265.8 1820.2,265.1" fill="none" stroke="#e8e8e8" stroke-width="1.3"/>
<line x1="981.5" y1="96" x2="981.5" y2="323.2" stroke="#d04030" stroke-width="1.5"/>
<line x1="1401.3" y1="96" x2="1401.3" y2="323.2" stroke="#e8e840" stroke-width="1"/>
</svg>
<div class="t" style="left:926.65px;top:88.17px;font-size:19.40px;letter-spacing:0.700px;color:#fff;">40.0</div>
<div class="t" style="left:926.65px;top:134.37px;font-size:19.40px;letter-spacing:0.700px;color:#fff;">20.0</div>
<div class="t" style="left:938.11px;top:180.57px;font-size:19.40px;letter-spacing:0.700px;color:#fff;">0.0</div>
<div class="t" style="left:919.45px;top:225.57px;font-size:19.40px;letter-spacing:0.700px;color:#fff;">-20.0</div>
<div class="t" style="left:919.45px;top:271.47px;font-size:19.40px;letter-spacing:0.700px;color:#fff;">-40.0</div>
<div class="t" style="left:919.45px;top:315.37px;font-size:19.40px;letter-spacing:0.700px;color:#fff;">-60.0</div>
<div class="t" style="left:1031.05px;top:331.10px;font-size:20.20px;letter-spacing:0.000px;color:#fff;">203.8</div>
<div class="t" style="left:1121.50px;top:331.10px;font-size:20.20px;letter-spacing:0.000px;color:#fff;">204</div>
<div class="t" style="left:1195.39px;top:331.10px;font-size:20.20px;letter-spacing:0.000px;color:#fff;">204.2</div>
<div class="t" style="left:1277.31px;top:331.10px;font-size:20.20px;letter-spacing:0.000px;color:#fff;">204.4</div>
<div class="t" style="left:1359.53px;top:331.10px;font-size:20.20px;letter-spacing:0.000px;color:#fff;">204.6</div>
<div class="t" style="left:1441.65px;top:331.10px;font-size:20.20px;letter-spacing:0.000px;color:#fff;">204.8</div>
<div class="t" style="left:1532.20px;top:331.10px;font-size:20.20px;letter-spacing:0.000px;color:#fff;">205</div>
<div class="t" style="left:1605.99px;top:331.10px;font-size:20.20px;letter-spacing:0.000px;color:#fff;">205.2</div>
<div class="t" style="left:1687.91px;top:331.10px;font-size:20.20px;letter-spacing:0.000px;color:#fff;">205.4</div>
<div class="t" style="left:1770.13px;top:331.10px;font-size:20.20px;letter-spacing:0.000px;color:#fff;">205.6</div>
<div class="t" style="left:1309.62px;top:361.20px;font-size:22.21px;letter-spacing:0.848px;color:#fff;">Frequency (MHz)</div>
<div class="t" style="left:882.59px;top:269.96px;font-size:23.90px;letter-spacing:-0.062px;color:#fff;transform-origin:1.91px 20.24px;transform:rotate(-90deg);">Magnitude (dB)</div>
<div class="r" style="left:0px;top:400px;width:1868.00px;height:7.00px;background:linear-gradient(#939393 0%, #828282 30%, #828282 70%, #929292 100%);"></div>
<div class="r" style="left:0px;top:407px;width:1868.00px;height:59.00px;background:#252525;"></div>
<div class="t" style="left:14.99px;top:430.22px;font-size:23.60px;letter-spacing:-0.160px;color:#fff;font-style:italic;">DAB+</div>
<div class="r" style="left:100px;top:422px;width:90px;height:33px;box-sizing:border-box;border:1.5px solid #8a8a8a;border-radius:5px;background:#252525"></div>
<div class="t" style="left:102.99px;top:429.22px;font-size:18.99px;letter-spacing:0.000px;color:#fff;transform-origin:0 0;transform:scaleX(0.9453);">9B</div>
<svg class="r" style="left:156px;top:433px" width="18" height="10"><polygon points="1.4,0.9 17,0.9 9.2,9" fill="#fff"/></svg>
<div class="r" style="left:205px;top:407px;width:1.00px;height:59.00px;background:#d0d0d0;"></div>
<div class="r" style="left:382px;top:407px;width:423.00px;height:59.00px;background:#2e2e2e;"></div>
<div class="r" style="left:206px;top:407px;width:176.00px;height:59.00px;background:#a87418;"></div>
<div class="t" style="left:227.45px;top:427.57px;font-size:23.18px;letter-spacing:-0.139px;color:#f5c86a;">EId: 9102</div>
<div class="t" style="left:354.64px;top:427.42px;font-size:23.60px;letter-spacing:0.000px;color:#eee640;transform-origin:0 0;transform:scaleX(0.9344);">MUX3-OSTSJ</div>
<div class="t" style="left:523.71px;top:427.30px;font-size:23.74px;letter-spacing:0.210px;color:#fff;">2022-07-28</div>
<div class="t" style="left:660.42px;top:427.30px;font-size:23.74px;letter-spacing:-0.589px;color:#fff;">16:27:48 Z</div>
<div class="r" style="left:805px;top:407px;width:4.00px;height:59.00px;background:#e0e0e0;"></div>
<div class="r" style="left:824.2px;top:422.2px;width:38px;height:32.5px;box-sizing:border-box;border:1.5px solid #8a8a8a;border-radius:5px;background:#252525"></div>
<svg class="r" style="left:833px;top:433px" width="20" height="10"><polygon points="1.4,0.9 17.2,0.9 9.3,9" fill="#fff"/></svg>
<div class="r" style="left:897.2px;top:422.2px;width:34.6px;height:34.6px;border-radius:50%;background:#1b5c98"></div>
<div class="r" style="left:907.8px;top:432.4px;width:14px;height:14px;border-radius:50%;background:#ff0000"></div>
<div class="r" style="left:950.3px;top:422.8px;width:33.4px;height:33.4px;border-radius:50%;background:#1d3d5e"></div>
<div class="r" style="left:960px;top:432.1px;width:14.00px;height:15.00px;background:#121820;"></div>
<div class="t" style="left:1026.61px;top:427.82px;font-size:24.30px;letter-spacing:-0.847px;color:#fff;">SId: 9D10</div>
<div class="t" style="left:1172.55px;top:419.04px;font-size:34.92px;letter-spacing:-0.839px;color:#ffff20;">Classic FM</div>
<div class="t" style="left:1382.23px;top:428.25px;font-size:23.80px;letter-spacing:0.505px;color:#fff;">96</div>
<div class="t" style="left:1415.15px;top:428.25px;font-size:23.80px;letter-spacing:0.154px;color:#fff;">kbps</div>
<div class="t" style="left:1480.39px;top:428.18px;font-size:23.88px;letter-spacing:0.000px;color:#fff;transform-origin:0 0;transform:scaleX(0.7926);">EEP</div>
<div class="t" style="left:1524.75px;top:428.25px;font-size:23.80px;letter-spacing:0.221px;color:#fff;">3-A</div>
<svg class="r" style="left:1605px;top:412px" width="40" height="52"><path d="M7.9 17.3 H16 L31 7.8 V45 L16 34.9 H7.9 Z M16 17.3 V34.9" fill="none" stroke="#e8e8e8" stroke-width="2" stroke-linejoin="miter"/></svg>
<div class="r" style="left:1797.2px;top:420.4px;width:90px;height:32.5px;box-sizing:border-box;border:1.5px solid #8a8a8a;border-radius:5px;background:#252525"></div>
<div class="t" style="left:1798.69px;top:428.40px;font-size:17.60px;letter-spacing:0.962px;color:#fff;">DAB</div>
<svg class="r" style="left:1853px;top:431px" width="18" height="10"><polygon points="1.2,1.2 17,1.2 9.1,9" fill="#fff"/></svg>
<div class="r" style="left:0px;top:466px;width:1868.00px;height:1.00px;background:#e8eef4;"></div>
<div class="r" style="left:0px;top:467px;width:1868.00px;height:507.00px;background:#000;"></div>
<div class="r" style="left:0px;top:467px;width:292.00px;height:507.00px;background:#1a5886;"></div>
<div class="r" style="left:0px;top:467px;width:292.00px;height:51.00px;background:#0f2b4c;"></div>
<div class="t" style="left:6.85px;top:478.12px;font-size:28.91px;letter-spacing:-0.429px;color:#f0f020;">Classic FM</div>
<div class="t" style="left:8.31px;top:529.82px;font-size:23.60px;letter-spacing:-0.252px;color:#fff;">BM myRock</div>
<div class="t" style="left:8.31px;top:567.67px;font-size:23.60px;letter-spacing:-0.072px;color:#fff;">BM Radio 100</div>
<div class="t" style="left:8.31px;top:605.52px;font-size:23.60px;letter-spacing:-0.016px;color:#fff;">BM Radio Soft</div>
<div class="t" style="left:8.31px;top:643.37px;font-size:23.60px;letter-spacing:-0.090px;color:#fff;">BM The Voice</div>
<div class="r" style="left:2px;top:672.2px;width:193px;height:37.4px;box-sizing:border-box;border:1px solid #3a8ad0;background:#2068a0"></div>
<div class="r" style="left:3.5px;top:673.7px;width:190px;height:34.4px;box-sizing:border-box;border:1px dotted #0a1a2a;"></div>
<div class="t" style="left:9.02px;top:681.22px;font-size:23.60px;letter-spacing:-0.702px;color:#fff;">Classic FM</div>
<div class="t" style="left:9.02px;top:719.07px;font-size:23.60px;letter-spacing:-0.755px;color:#fff;">Classic Rock KBH</div>
<div class="t" style="left:8.67px;top:756.92px;font-size:23.60px;letter-spacing:0.293px;color:#fff;">mix 7.</div>
<div class="t" style="left:8.48px;top:794.77px;font-size:23.60px;letter-spacing:0.000px;color:#fff;transform-origin:0 0;transform:scaleX(0.9134);">PLANET ROCK</div>
<div class="t" style="left:8.31px;top:832.62px;font-size:23.60px;letter-spacing:0.102px;color:#fff;">PopFM 80&#x27;er.</div>
<div class="t" style="left:8.31px;top:870.47px;font-size:23.60px;letter-spacing:-0.106px;color:#fff;">Radio Køge</div>
<div class="t" style="left:8.31px;top:908.32px;font-size:23.60px;letter-spacing:0.148px;color:#fff;">Radio Vinyl</div>
<div class="t" style="left:9.14px;top:946.17px;font-size:23.60px;letter-spacing:-0.709px;color:#fff;">SLR København</div>
<div class="r" style="left:292px;top:467px;width:8.00px;height:507.00px;background:#f2f3f7;"></div>
<div class="r" style="left:300px;top:467px;width:272.00px;height:507.00px;background:#1a5886;"></div>
<div class="r" style="left:300px;top:467px;width:272.00px;height:51.00px;background:#0f2b4c;"></div>
<div class="t" style="left:307.20px;top:478.42px;font-size:28.91px;letter-spacing:0.070px;color:#fff;">Service Quality</div>
<div class="t" style="left:315.13px;top:543.96px;font-size:20.95px;letter-spacing:0.000px;color:#fff;transform-origin:0 0;transform:scaleX(0.9238);">SNR (dB)</div>
<div class="r" style="left:495.2px;top:533.9px;width:59.80px;height:37.60px;background:#888888;"></div>
<div class="r" style="left:495.2px;top:533.9px;width:17.80px;height:37.60px;background:#f9a602;"></div>
<div class="t" style="left:509.06px;top:545.09px;font-size:18.20px;letter-spacing:0.000px;color:#fff;transform-origin:0 0;transform:scaleX(0.9097);">10,3</div>
<div class="t" style="left:314.32px;top:590.66px;font-size:20.95px;letter-spacing:-0.622px;color:#fff;">FIC (ok %)</div>
<div class="r" style="left:495.2px;top:580.6px;width:59.80px;height:37.60px;background:#888888;"></div>
<div class="r" style="left:495.2px;top:580.6px;width:59.80px;height:37.60px;background:#007800;"></div>
<div class="t" style="left:510.24px;top:591.79px;font-size:18.20px;letter-spacing:-0.501px;color:#fff;">100</div>
<div class="t" style="left:314.32px;top:637.46px;font-size:20.95px;letter-spacing:-0.762px;color:#fff;">RS (ok %)</div>
<div class="r" style="left:495.2px;top:627.4px;width:59.80px;height:37.60px;background:#888888;"></div>
<div class="r" style="left:495.2px;top:627.4px;width:59.80px;height:37.60px;background:#007800;"></div>
<div class="t" style="left:510.24px;top:638.59px;font-size:18.20px;letter-spacing:-0.501px;color:#fff;">100</div>
<div class="t" style="left:314.32px;top:682.76px;font-size:20.95px;letter-spacing:0.167px;color:#fff;">Null Symbol</div>
<div class="r" style="left:495.2px;top:672.7px;width:59.80px;height:37.60px;background:#888888;"></div>
<div class="r" style="left:495.2px;top:672.7px;width:59.80px;height:37.60px;background:#007800;"></div>
<div class="t" style="left:315.06px;top:728.56px;font-size:20.95px;letter-spacing:-0.279px;color:#fff;">SymbolTime (ms)</div>
<div class="r" style="left:495.2px;top:718.5px;width:59.80px;height:37.60px;background:#888888;"></div>
<div class="r" style="left:495.2px;top:718.5px;width:18.80px;height:37.60px;background:#007800;"></div>
<div class="t" style="left:507.97px;top:729.69px;font-size:18.20px;letter-spacing:-0.720px;color:#fff;">0,47</div>
<div class="t" style="left:314.32px;top:774.76px;font-size:20.95px;letter-spacing:-0.396px;color:#fff;">FrameTime (ms)</div>
<div class="r" style="left:495.2px;top:764.7px;width:59.80px;height:37.60px;background:#888888;"></div>
<div class="r" style="left:495.2px;top:764.7px;width:37.50px;height:37.60px;background:#007800;"></div>
<div class="t" style="left:507.88px;top:775.89px;font-size:18.20px;letter-spacing:-0.551px;color:#fff;">95,5</div>
<div class="r" style="left:572px;top:467px;width:4.00px;height:507.00px;background:#bec4cc;"></div>
<div class="r" style="left:571px;top:467px;width:1.00px;height:507.00px;background:rgba(5,25,45,0.75);"></div>
<div class="r" style="left:576px;top:467px;width:523.00px;height:507.00px;background:#1a5886;"></div>
<div class="r" style="left:576px;top:467px;width:523.00px;height:50.60px;background:#0f2b4c;"></div>
<div class="r" style="left:576px;top:467px;width:1.00px;height:507.00px;background:rgba(5,25,45,0.75);"></div>
<div class="r" style="left:588.2px;top:478.2px;width:89.2px;height:40.5px;box-sizing:border-box;background:#8a8a8a;border:1px solid #6f8399;border-bottom:none;border-radius:6px 15px 0 0;"></div>
<div class="r" style="left:678.2px;top:478.2px;width:64.9px;height:40.5px;box-sizing:border-box;background:#1a5886;border:1px solid #5a7fa8;border-bottom:none;border-radius:6px 15px 0 0;"></div>
<div class="r" style="left:744.1px;top:478.2px;width:105.0px;height:40.5px;box-sizing:border-box;background:#8a8a8a;border:1px solid #6f8399;border-bottom:none;border-radius:6px 15px 0 0;"></div>
<div class="r" style="left:850.1px;top:478.2px;width:85.6px;height:40.5px;box-sizing:border-box;background:#8a8a8a;border:1px solid #6f8399;border-bottom:none;border-radius:6px 15px 0 0;"></div>
<div class="r" style="left:937.1px;top:478.2px;width:128.4px;height:40.5px;box-sizing:border-box;background:#8a8a8a;border:1px solid #6f8399;border-bottom:none;border-radius:6px 15px 0 0;"></div>
<div class="r" style="left:679.2px;top:517px;width:62.90px;height:2.50px;background:#1a5886;"></div>
<div class="t" style="left:607.07px;top:489.51px;font-size:25.14px;letter-spacing:-1.092px;color:#dcdcdc;">Sync</div>
<div class="t" style="left:697.90px;top:489.51px;font-size:25.14px;letter-spacing:-0.861px;color:#ffffff;">TII</div>
<div class="t" style="left:764.40px;top:489.51px;font-size:25.14px;letter-spacing:0.668px;color:#dcdcdc;">Audio</div>
<div class="t" style="left:870.10px;top:489.37px;font-size:24.72px;letter-spacing:0.000px;color:#dcdcdc;transform-origin:0 0;transform:scaleX(0.9552);">AAC</div>
<div class="t" style="left:956.69px;top:489.37px;font-size:24.72px;letter-spacing:0.752px;color:#dcdcdc;">Options</div>
<div class="r" style="left:628px;top:534px;width:14px;height:14px;border-radius:50%;background:#ff0000"></div>
<div class="r" style="left:671.8px;top:533.7px;width:13.20px;height:13.90px;background:#0e2a44;"></div>
<div class="r" style="left:599px;top:562.8px;width:371.40px;height:1.00px;background:#9fb2c6;"></div>
<div class="t" style="left:597.38px;top:592.52px;font-size:22.77px;letter-spacing:-0.053px;color:#fff;">Pattern</div>
<div class="t" style="left:697.88px;top:592.52px;font-size:22.77px;letter-spacing:0.621px;color:#fff;">MainId</div>
<div class="t" style="left:797.98px;top:592.52px;font-size:22.77px;letter-spacing:-0.203px;color:#fff;">SubId</div>
<div class="t" style="left:884.88px;top:592.52px;font-size:22.77px;letter-spacing:0.036px;color:#fff;">Strength</div>
<div class="r" style="left:599px;top:616.6px;width:371.00px;height:1.40px;background:#a9b9ca;"></div>
<div class="r" style="left:985px;top:519px;width:1.00px;height:455.00px;background:#5f88b0;"></div>
<div class="t" style="left:993.40px;top:549.47px;font-size:20.11px;letter-spacing:0.264px;color:#fff;">Threshold</div>
<div class="r" style="left:1033px;top:606.2px;width:3.40px;height:167.50px;background:#e0e0e0;border-radius:1.5px;"></div>
<div class="r" style="left:1025.7px;top:731.9px;width:18px;height:18px;border-radius:50%;background:radial-gradient(ellipse 60% 35% at 50% 12%, rgba(250,250,250,0.9) 0%, rgba(250,250,250,0) 100%), linear-gradient(#e4e4e4 0%, #c4c4c4 35%, #8e8e8e 75%, #5e5e5e 100%);box-shadow:0 0 0 0.7px rgba(30,30,30,0.6);"></div>
<div class="t" style="left:1013.20px;top:787.77px;font-size:20.11px;letter-spacing:0.164px;color:#fff;">0.16</div>
<div class="r" style="left:1099px;top:467px;width:8.00px;height:507.00px;background:#f2f3f7;"></div>
<div class="r" style="left:1107px;top:467px;width:761.00px;height:31.00px;background:#0f2b4c;"></div>
<div class="t" style="left:1340.65px;top:469.91px;font-size:22.91px;letter-spacing:-0.756px;color:#fff;">Channel Impulse Response (CIR)</div>
<svg class="r" style="left:1838px;top:470px" width="26" height="24"><polygon points="4.6,3.8 22.2,3.8 13.4,19.3" fill="none" stroke="#d4dce8" stroke-width="1.25"/></svg>
<div class="r" style="left:1107px;top:498px;width:761.00px;height:239.00px;background:#000;"></div>
<div class="r" style="left:1122.2px;top:515.1px;width:19.2px;height:19.2px;border-radius:50%;background:#e6e6e6"></div>
<div class="t" style="left:1146.64px;top:517.77px;font-size:17.04px;letter-spacing:-0.152px;color:#fff;">Freeze</div>
<div class="r" style="left:1229.0px;top:515.1px;width:19.2px;height:19.2px;border-radius:50%;background:#e6e6e6"></div>
<div class="t" style="left:1254.25px;top:517.77px;font-size:17.04px;letter-spacing:0.442px;color:#fff;">Gradient</div>
<div class="t" style="left:1128.78px;top:578.33px;font-size:18.16px;letter-spacing:-0.048px;color:#fff;">Smoothing Level</div>
<div class="r" style="left:1131.8px;top:606px;width:1.60px;height:5.00px;background:#a8a8a8;"></div>
<div class="r" style="left:1151.49px;top:606px;width:1.60px;height:5.00px;background:#a8a8a8;"></div>
<div class="r" style="left:1171.18px;top:606px;width:1.60px;height:5.00px;background:#a8a8a8;"></div>
<div class="r" style="left:1190.87px;top:606px;width:1.60px;height:5.00px;background:#a8a8a8;"></div>
<div class="r" style="left:1210.56px;top:606px;width:1.60px;height:5.00px;background:#a8a8a8;"></div>
<div class="r" style="left:1230.25px;top:606px;width:1.60px;height:5.00px;background:#a8a8a8;"></div>
<div class="r" style="left:1249.94px;top:606px;width:1.60px;height:5.00px;background:#a8a8a8;"></div>
<div class="r" style="left:1269.6299999999999px;top:606px;width:1.60px;height:5.00px;background:#a8a8a8;"></div>
<div class="r" style="left:1289.32px;top:606px;width:1.60px;height:5.00px;background:#a8a8a8;"></div>
<div class="r" style="left:1309.01px;top:606px;width:1.60px;height:5.00px;background:#a8a8a8;"></div>
<div class="r" style="left:1122px;top:620.0px;width:206.20px;height:3.00px;background:#e6e6e6;border-radius:1.5px;"></div>
<div class="r" style="left:1162.0px;top:612.8px;width:18px;height:18px;border-radius:50%;background:radial-gradient(ellipse 60% 35% at 50% 12%, rgba(250,250,250,0.9) 0%, rgba(250,250,250,0) 100%), linear-gradient(#e4e4e4 0%, #c4c4c4 35%, #8e8e8e 75%, #5e5e5e 100%);box-shadow:0 0 0 0.7px rgba(30,30,30,0.6);"></div>
<div class="t" style="left:1129.11px;top:660.58px;font-size:16.20px;letter-spacing:1.321px;color:#fff;">Zoom X</div>
<div class="r" style="left:1122px;top:694.7px;width:206.20px;height:3.00px;background:#e6e6e6;border-radius:1.5px;"></div>
<div class="r" style="left:1123.0px;top:687.5px;width:18px;height:18px;border-radius:50%;background:radial-gradient(ellipse 60% 35% at 50% 12%, rgba(250,250,250,0.9) 0%, rgba(250,250,250,0) 100%), linear-gradient(#e4e4e4 0%, #c4c4c4 35%, #8e8e8e 75%, #5e5e5e 100%);box-shadow:0 0 0 0.7px rgba(30,30,30,0.6);"></div>
<div class="r" style="left:1107px;top:733px;width:230px;height:4px;overflow:hidden"><div class="t" style="left:22.6px;top:0.8px;font-size:17.2px;line-height:1;color:#fff;letter-spacing:0.3px">Zoom Y</div></div>
<div class="r" style="left:1337.7px;top:499px;width:7.30px;height:130.40px;background:#a8a8a8;border-radius:4px;"></div>
<svg class="r" style="left:0;top:0" width="1868" height="974">
<rect x="1467" y="518" width="94.5" height="139.39999999999998" fill="#404040"/>
<line x1="1467" y1="518.0" x2="1851" y2="518.0" stroke="#8c8c8c" stroke-width="1.2"/>
<line x1="1467" y1="545.9" x2="1851" y2="545.9" stroke="#8c8c8c" stroke-width="1.2"/>
<line x1="1467" y1="573.8" x2="1851" y2="573.8" stroke="#8c8c8c" stroke-width="1.2"/>
<line x1="1467" y1="601.6" x2="1851" y2="601.6" stroke="#8c8c8c" stroke-width="1.2"/>
<line x1="1467" y1="629.5" x2="1851" y2="629.5" stroke="#8c8c8c" stroke-width="1.2"/>
<line x1="1467" y1="657.4" x2="1851" y2="657.4" stroke="#8c8c8c" stroke-width="1.2"/>
<line x1="1484.5" y1="518" x2="1484.5" y2="657.4" stroke="#8c8c8c" stroke-width="1.2"/>
<line x1="1510.2" y1="518" x2="1510.2" y2="657.4" stroke="#8c8c8c" stroke-width="1.2"/>
<line x1="1535.9" y1="518" x2="1535.9" y2="657.4" stroke="#8c8c8c" stroke-width="1.2"/>
<line x1="1561.6" y1="518" x2="1561.6" y2="657.4" stroke="#8c8c8c" stroke-width="1.2"/>
<line x1="1587.3" y1="518" x2="1587.3" y2="657.4" stroke="#8c8c8c" stroke-width="1.2"/>
<line x1="1613.0" y1="518" x2="1613.0" y2="657.4" stroke="#8c8c8c" stroke-width="1.2"/>
<line x1="1638.7" y1="518" x2="1638.7" y2="657.4" stroke="#8c8c8c" stroke-width="1.2"/>
<line x1="1664.4" y1="518" x2="1664.4" y2="657.4" stroke="#8c8c8c" stroke-width="1.2"/>
<line x1="1690.1" y1="518" x2="1690.1" y2="657.4" stroke="#8c8c8c" stroke-width="1.2"/>
<line x1="1715.8" y1="518" x2="1715.8" y2="657.4" stroke="#8c8c8c" stroke-width="1.2"/>
<line x1="1741.5" y1="518" x2="1741.5" y2="657.4" stroke="#8c8c8c" stroke-width="1.2"/>
<line x1="1767.2" y1="518" x2="1767.2" y2="657.4" stroke="#8c8c8c" stroke-width="1.2"/>
<line x1="1792.9" y1="518" x2="1792.9" y2="657.4" stroke="#8c8c8c" stroke-width="1.2"/>
<line x1="1818.6" y1="518" x2="1818.6" y2="657.4" stroke="#8c8c8c" stroke-width="1.2"/>
<line x1="1844.3" y1="518" x2="1844.3" y2="657.4" stroke="#8c8c8c" stroke-width="1.2"/>
<line x1="1851" y1="518" x2="1851" y2="657.4" stroke="#8c8c8c" stroke-width="1.5"/>
<polyline points="1468.0,643.1 1469.1,654.2 1470.0,645.4 1471.1,656.2 1472.1,641.1 1473.2,649.7 1474.1,645.7 1475.2,654.6 1476.2,642.1 1477.3,652.1 1478.2,642.3 1479.3,654.4 1480.3,650.6 1481.4,654.0 1482.3,647.9 1483.4,654.8 1484.4,646.9 1485.5,649.0 1486.4,644.9 1487.5,654.3 1488.5,633.6 1489.6,652.1 1490.5,637.4 1491.6,652.3 1492.6,647.6 1493.7,654.4 1494.6,636.5 1495.7,655.9 1496.7,637.1 1497.8,649.1 1498.7,632.2 1499.8,653.5 1500.8,631.4 1501.9,650.0 1502.8,641.8 1503.9,653.1 1504.9,638.2 1506.0,647.1 1506.9,632.0 1508.0,654.3 1509.0,635.0 1510.1,655.9 1511.0,644.2 1512.1,648.4 1513.1,637.0 1514.2,652.7 1515.1,637.8 1516.2,656.1 1517.2,641.6 1518.3,650.0 1519.2,638.9 1520.3,654.3 1521.3,641.5 1522.4,653.6 1523.3,638.4 1524.4,648.9 1525.4,640.9 1526.5,654.1 1527.4,647.2 1528.5,646.9 1529.5,637.5 1530.6,648.4 1531.5,637.5 1532.6,649.1 1533.6,643.8 1534.7,653.4 1535.6,644.2 1536.7,655.6 1537.7,632.8 1538.8,656.0 1539.7,641.2 1540.8,646.8 1541.8,645.2 1542.9,655.3 1543.8,643.6 1544.9,651.8 1545.9,634.3 1547.0,649.3 1547.9,637.9 1549.0,655.0 1550.0,644.2 1551.1,650.6 1552.0,642.3 1553.1,653.5 1554.1,633.5 1555.2,651.8 1556.1,636.0 1557.5,632.0 1558.8,627.0 1560.2,612.0 1561.8,571.6 1562.8,596.0 1563.8,618.0 1565.0,614.0 1566.2,632.0 1567.5,625.0 1569.0,642.0 1570.5,633.0 1571.5,625.8 1572.6,641.7 1573.6,626.5 1574.7,642.8 1575.6,630.5 1576.7,648.2 1577.7,631.4 1578.8,643.1 1579.7,637.8 1580.8,647.8 1581.8,626.2 1582.9,647.1 1583.8,635.1 1584.9,650.0 1585.9,632.4 1587.0,647.6 1587.9,634.4 1589.0,651.0 1590.0,637.5 1591.1,647.0 1592.0,636.7 1593.1,653.8 1594.1,634.7 1595.2,653.5 1596.1,639.9 1597.2,652.9 1598.2,633.6 1599.3,652.9 1600.2,646.8 1601.3,647.0 1602.3,638.4 1603.4,655.4 1604.3,638.4 1605.4,649.8 1606.4,641.0 1607.5,655.5 1608.4,650.5 1609.5,651.3 1610.5,642.2 1611.6,654.9 1612.5,645.7 1613.6,649.5 1614.6,639.2 1615.7,654.1 1616.6,638.3 1617.7,648.4 1618.7,642.0 1619.8,648.6 1620.7,646.3 1621.8,654.8 1622.8,645.7 1623.9,651.4 1624.8,643.1 1625.9,653.2 1626.9,645.0 1628.0,651.2 1628.9,642.3 1630.0,652.2 1631.0,644.3 1632.1,651.8 1633.0,648.3 1634.1,654.1 1635.1,643.8 1636.2,654.1 1637.1,647.5 1638.2,652.9 1639.2,647.6 1640.3,654.0 1641.2,646.2 1642.3,655.5 1643.3,642.6 1644.4,652.7 1645.3,638.2 1646.4,655.5 1647.4,648.8 1648.5,652.6 1649.4,649.5 1650.5,655.0 1651.5,647.1 1652.6,654.3 1653.5,637.0 1654.6,648.4 1655.6,641.5 1656.7,655.6 1657.6,646.5 1658.7,654.9 1659.7,641.8 1660.8,651.7 1661.7,638.4 1662.8,654.0 1663.8,642.5 1664.9,654.9 1665.8,636.4 1666.9,649.3 1667.9,635.5 1669.0,650.4 1669.9,642.8 1671.0,650.7 1672.0,644.4 1673.1,650.0 1674.0,643.1 1675.1,653.6 1676.1,638.4 1677.2,652.3 1678.1,635.6 1679.2,655.8 1680.2,640.6 1681.3,651.4 1682.2,645.8 1683.3,656.2 1684.3,644.2 1685.4,653.3 1686.3,645.4 1687.4,655.2 1688.4,648.1 1689.5,655.7 1690.4,647.6 1691.5,652.8 1692.5,647.4 1693.6,655.7 1694.5,645.8 1695.6,655.7 1696.6,643.7 1697.7,653.8 1698.6,646.6 1699.7,652.8 1700.7,648.9 1701.8,652.2 1702.7,648.6 1703.8,652.4 1704.8,645.3 1705.9,656.1 1706.8,646.7 1707.9,653.5 1708.9,647.0 1710.0,653.4 1710.9,647.7 1712.0,655.3 1713.0,643.5 1714.1,650.7 1715.0,642.4 1716.1,649.9 1717.1,646.5 1718.2,654.7 1719.1,642.3 1720.2,656.1 1721.2,639.9 1722.3,652.3 1723.2,648.8 1724.3,654.0 1725.3,650.1 1726.4,651.0 1727.3,642.6 1728.4,656.2 1729.4,638.6 1730.5,650.2 1731.4,648.2 1732.5,653.8 1733.5,634.3 1734.6,651.7 1735.5,641.3 1736.6,651.3 1737.6,652.9 1738.7,653.9 1739.6,648.3 1740.7,653.0 1741.7,639.9 1742.8,655.6 1743.7,640.2 1744.8,655.4 1745.8,643.0 1746.9,651.6 1747.8,646.1 1748.9,653.2 1749.9,643.4 1751.0,656.0 1751.9,643.1 1753.0,652.2 1754.0,646.1 1755.1,652.1 1756.0,645.1 1757.1,652.8 1758.1,650.5 1759.2,652.8 1760.1,646.6 1761.2,654.0 1762.2,644.7 1763.3,654.2 1764.2,647.1 1765.3,651.8 1766.3,642.3 1767.4,652.1 1768.3,637.9 1769.4,649.9 1770.4,641.3 1771.5,649.2 1772.4,640.8 1773.5,654.7 1774.5,650.1 1775.6,651.6 1776.5,638.0 1777.6,651.8 1778.6,635.8 1779.7,654.1 1780.6,637.2 1781.7,651.5 1782.7,635.2 1783.8,649.5 1784.7,637.3 1785.8,653.3 1786.8,639.6 1787.9,649.0 1788.8,639.2 1789.9,654.2 1790.9,642.4 1792.0,654.6 1792.9,644.3 1794.0,649.4 1795.0,644.7 1796.1,655.0 1797.0,636.4 1798.1,650.2 1799.1,637.1 1800.2,655.3 1801.1,649.1 1802.2,654.4 1803.2,638.1 1804.3,655.1 1805.2,643.0 1806.3,654.1 1807.3,644.7 1808.4,650.2 1809.3,644.2 1810.4,650.2 1811.4,641.4 1812.5,650.1 1813.4,643.2 1814.5,650.9 1815.5,638.4 1816.6,652.8 1817.5,638.6 1818.6,652.5 1819.6,646.2 1820.7,653.2 1821.6,640.9 1822.7,653.4 1823.7,648.5 1824.8,652.6 1825.7,642.0 1826.8,653.2 1827.8,651.0 1828.9,654.9 1829.8,649.5 1830.9,654.6 1831.9,653.3 1833.0,654.5 1833.9,653.1 1835.0,654.5 1836.0,655.6 1837.1,652.6 1838.0,648.6 1839.1,650.0 1840.1,641.5 1841.2,648.5 1842.1,640.6 1843.2,650.9 1844.2,642.8 1845.3,650.5 1846.2,647.2 1847.3,649.9 1848.3,638.1 1849.4,655.6" fill="none" stroke="#f2f2f2" stroke-width="1.5"/>
<line x1="1561.5" y1="518" x2="1561.5" y2="657.4" stroke="#e8e840" stroke-width="1" stroke-dasharray="1.5 1.5"/>
<polyline points="1557.5,636 1558.8,627 1560.2,612 1561.8,571.6" fill="none" stroke="#fff8b0" stroke-width="1.3"/>
<line x1="1467.5" y1="518" x2="1467.5" y2="657.4" stroke="#d04030" stroke-width="1.5"/>
<circle cx="1561.8" cy="571.6" r="5.9" fill="#ffee00"/>
</svg>
<div class="t" style="left:1411.95px;top:508.77px;font-size:19.40px;letter-spacing:0.400px;color:#fff;">-10.0</div>
<div class="t" style="left:1411.95px;top:536.65px;font-size:19.40px;letter-spacing:0.400px;color:#fff;">-20.0</div>
<div class="t" style="left:1411.95px;top:564.53px;font-size:19.40px;letter-spacing:0.400px;color:#fff;">-30.0</div>
<div class="t" style="left:1411.95px;top:592.41px;font-size:19.40px;letter-spacing:0.400px;color:#fff;">-40.0</div>
<div class="t" style="left:1411.95px;top:620.29px;font-size:19.40px;letter-spacing:0.400px;color:#fff;">-50.0</div>
<div class="t" style="left:1411.95px;top:648.17px;font-size:19.40px;letter-spacing:0.400px;color:#fff;">-60.0</div>
<div class="t" style="left:1474.46px;top:664.52px;font-size:13.80px;letter-spacing:0.000px;color:#fff;">-60</div>
<div class="t" style="left:1500.16px;top:684.82px;font-size:13.80px;letter-spacing:0.000px;color:#fff;">-40</div>
<div class="t" style="left:1525.86px;top:664.52px;font-size:13.80px;letter-spacing:0.000px;color:#fff;">-20</div>
<div class="t" style="left:1557.74px;top:684.82px;font-size:13.80px;letter-spacing:0.000px;color:#fff;">0</div>
<div class="t" style="left:1579.54px;top:664.52px;font-size:13.80px;letter-spacing:0.000px;color:#fff;">20</div>
<div class="t" style="left:1605.44px;top:684.82px;font-size:13.80px;letter-spacing:0.000px;color:#fff;">40</div>
<div class="t" style="left:1630.94px;top:664.52px;font-size:13.80px;letter-spacing:0.000px;color:#fff;">60</div>
<div class="t" style="left:1656.67px;top:684.82px;font-size:13.80px;letter-spacing:0.000px;color:#fff;">80</div>
<div class="t" style="left:1678.34px;top:664.52px;font-size:13.80px;letter-spacing:0.000px;color:#fff;">100</div>
<div class="t" style="left:1704.04px;top:684.82px;font-size:13.80px;letter-spacing:0.000px;color:#fff;">120</div>
<div class="t" style="left:1729.74px;top:664.52px;font-size:13.80px;letter-spacing:0.000px;color:#fff;">140</div>
<div class="t" style="left:1755.44px;top:684.82px;font-size:13.80px;letter-spacing:0.000px;color:#fff;">160</div>
<div class="t" style="left:1781.14px;top:664.52px;font-size:13.80px;letter-spacing:0.000px;color:#fff;">180</div>
<div class="t" style="left:1807.01px;top:684.82px;font-size:13.80px;letter-spacing:0.000px;color:#fff;">200</div>
<div class="t" style="left:1832.71px;top:664.52px;font-size:13.80px;letter-spacing:0.000px;color:#fff;">220</div>
<div class="t" style="left:1547.15px;top:705.60px;font-size:20.67px;letter-spacing:-0.203px;color:#fff;">Distance Difference (km)</div>
<div class="t" style="left:1392.59px;top:634.78px;font-size:21.40px;letter-spacing:-0.664px;color:#fff;transform-origin:1.71px 18.12px;transform:rotate(-90deg);">Magnitude (d...</div>
<div class="r" style="left:1107px;top:737px;width:761.00px;height:8.00px;background:linear-gradient(#9a9a9a 0%, #939393 50%, #8a96a2 100%);"></div>
<div class="r" style="left:1107px;top:745px;width:761.00px;height:29.70px;background:#0f2b4c;"></div>
<div class="t" style="left:1447.65px;top:748.46px;font-size:22.49px;letter-spacing:-0.581px;color:#fff;">TII Carriers</div>
<svg class="r" style="left:1838px;top:748px" width="26" height="24"><polygon points="4.6,3.8 22.2,3.8 13.4,19.3" fill="none" stroke="#d4dce8" stroke-width="1.25"/></svg>
<svg class="r" style="left:0;top:0" width="1868" height="974">
<rect x="1219" y="939.3" width="626" height="26.300000000000068" fill="#444444"/>
<line x1="1219" y1="795.6" x2="1845" y2="795.6" stroke="#8c8c8c" stroke-width="1.2"/>
<line x1="1219" y1="829.6" x2="1845" y2="829.6" stroke="#8c8c8c" stroke-width="1.2"/>
<line x1="1219" y1="863.6" x2="1845" y2="863.6" stroke="#8c8c8c" stroke-width="1.2"/>
<line x1="1219" y1="897.6" x2="1845" y2="897.6" stroke="#8c8c8c" stroke-width="1.2"/>
<line x1="1219" y1="931.6" x2="1845" y2="931.6" stroke="#8c8c8c" stroke-width="1.2"/>
<line x1="1219" y1="965.6" x2="1845" y2="965.6" stroke="#8c8c8c" stroke-width="1.2"/>
<line x1="1257.5" y1="795.6" x2="1257.5" y2="965.6" stroke="#8c8c8c" stroke-width="1.2"/>
<line x1="1318.7" y1="795.6" x2="1318.7" y2="965.6" stroke="#8c8c8c" stroke-width="1.2"/>
<line x1="1379.8" y1="795.6" x2="1379.8" y2="965.6" stroke="#8c8c8c" stroke-width="1.2"/>
<line x1="1441.0" y1="795.6" x2="1441.0" y2="965.6" stroke="#8c8c8c" stroke-width="1.2"/>
<line x1="1502.2" y1="795.6" x2="1502.2" y2="965.6" stroke="#8c8c8c" stroke-width="1.2"/>
<line x1="1563.3" y1="795.6" x2="1563.3" y2="965.6" stroke="#8c8c8c" stroke-width="1.2"/>
<line x1="1624.5" y1="795.6" x2="1624.5" y2="965.6" stroke="#8c8c8c" stroke-width="1.2"/>
<line x1="1685.7" y1="795.6" x2="1685.7" y2="965.6" stroke="#8c8c8c" stroke-width="1.2"/>
<line x1="1746.9" y1="795.6" x2="1746.9" y2="965.6" stroke="#8c8c8c" stroke-width="1.2"/>
<line x1="1808.0" y1="795.6" x2="1808.0" y2="965.6" stroke="#8c8c8c" stroke-width="1.2"/>
<line x1="1845" y1="795.6" x2="1845" y2="965.6" stroke="#8c8c8c" stroke-width="1.5"/>
<line x1="1298.6" y1="795.6" x2="1298.6" y2="965.6" stroke="#f4f020" stroke-width="1.8" stroke-dasharray="2 2"/>
<line x1="1416.1" y1="795.6" x2="1416.1" y2="965.6" stroke="#f4f020" stroke-width="1.8" stroke-dasharray="2 2"/>
<line x1="1533.6" y1="795.6" x2="1533.6" y2="965.6" stroke="#f4f020" stroke-width="1.8" stroke-dasharray="2 2"/>
<line x1="1651.1" y1="795.6" x2="1651.1" y2="965.6" stroke="#f4f020" stroke-width="1.8" stroke-dasharray="2 2"/>
<line x1="1768.6" y1="795.6" x2="1768.6" y2="965.6" stroke="#f4f020" stroke-width="1.8" stroke-dasharray="2 2"/>
<line x1="1429" y1="795.6" x2="1429" y2="965.6" stroke="#c8c8c8" stroke-width="1.5"/>
<line x1="1506.3" y1="918" x2="1506.3" y2="965.6" stroke="#c8c8c8" stroke-width="1.5"/>
<line x1="1659.2" y1="894.5" x2="1659.2" y2="965.6" stroke="#c8c8c8" stroke-width="1.5"/>
<line x1="1219" y1="963.5" x2="1298" y2="963.5" stroke="#c8c8c8" stroke-width="1.5"/>
<line x1="1769" y1="963.5" x2="1845" y2="963.5" stroke="#c8c8c8" stroke-width="1.5"/>
<line x1="1219.5" y1="795.6" x2="1219.5" y2="965.6" stroke="#d04030" stroke-width="1.5"/>
</svg>
<div class="t" style="left:1181.38px;top:787.93px;font-size:17.80px;letter-spacing:0.900px;color:#fff;">1.0</div>
<div class="t" style="left:1181.47px;top:821.93px;font-size:17.80px;letter-spacing:0.900px;color:#fff;">0.8</div>
<div class="t" style="left:1181.47px;top:855.93px;font-size:17.80px;letter-spacing:0.900px;color:#fff;">0.6</div>
<div class="t" style="left:1181.29px;top:889.93px;font-size:17.80px;letter-spacing:0.900px;color:#fff;">0.4</div>
<div class="t" style="left:1181.65px;top:923.93px;font-size:17.80px;letter-spacing:0.900px;color:#fff;">0.2</div>
<div class="t" style="left:1181.38px;top:957.93px;font-size:17.80px;letter-spacing:0.900px;color:#fff;">0.0</div>
<div class="t" style="left:1155.22px;top:909.32px;font-size:21.00px;letter-spacing:-0.518px;color:#fff;transform-origin:1.68px 17.78px;transform:rotate(-90deg);">Magnitude</div>
</body></html>
